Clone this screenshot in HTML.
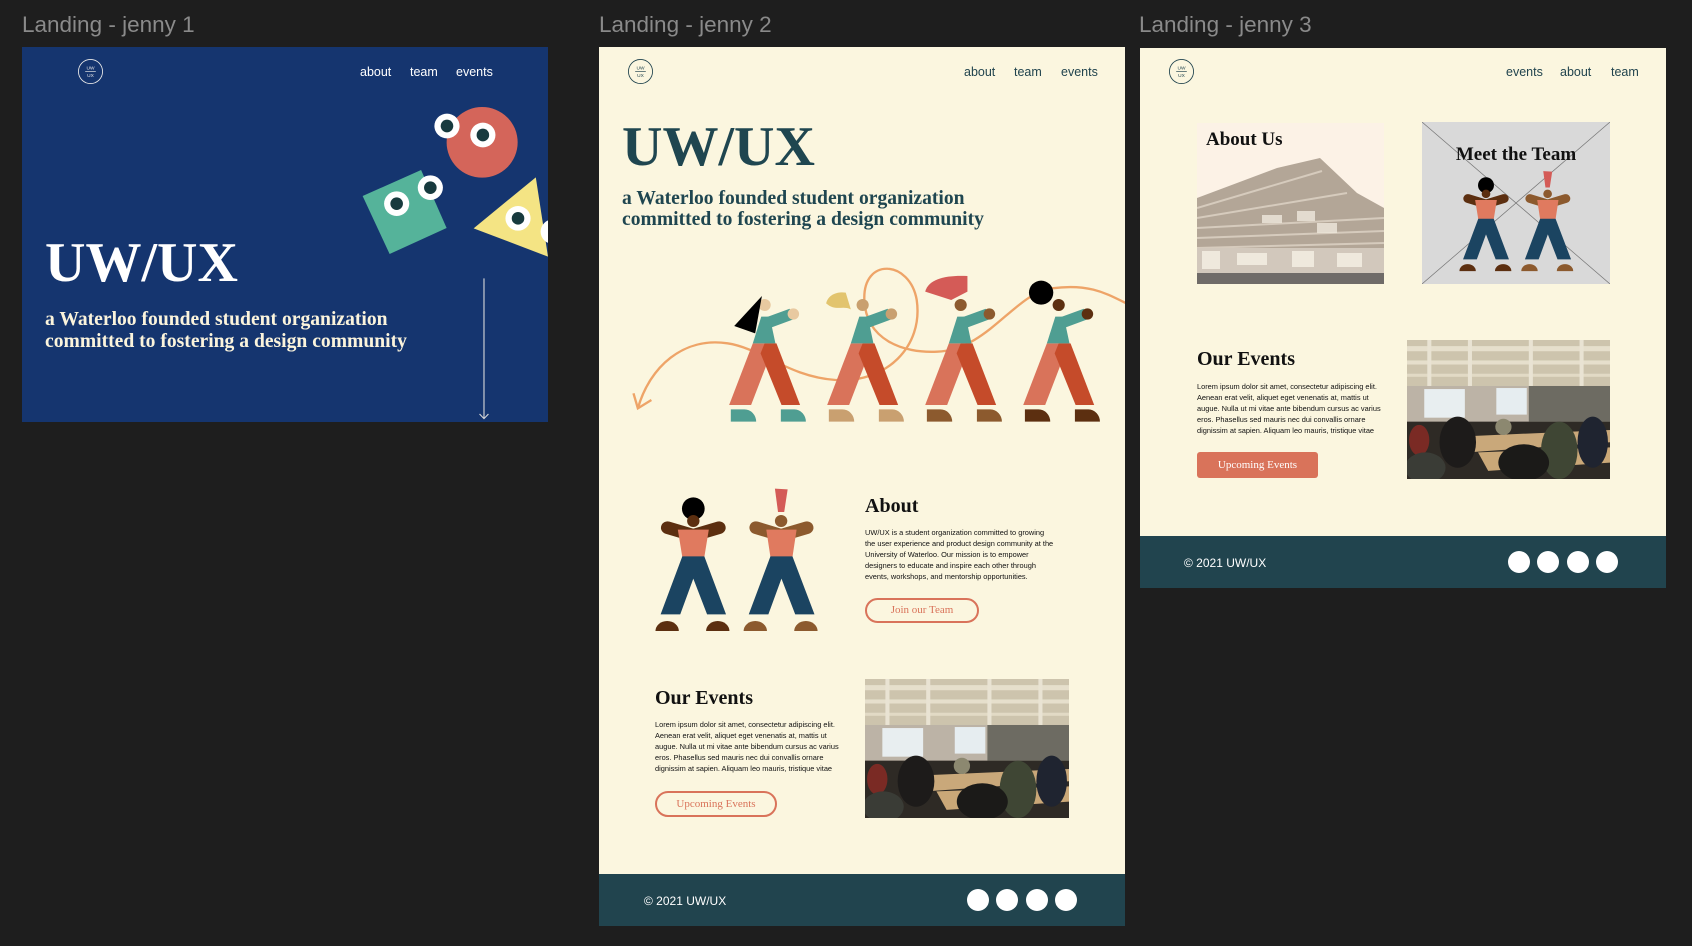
<!DOCTYPE html>
<html><head><meta charset="utf-8">
<style>
*{margin:0;padding:0;box-sizing:border-box}
body{width:1692px;height:946px;background:#1e1e1e;position:relative;overflow:hidden;font-family:"Liberation Sans",sans-serif}
.a{position:absolute;white-space:nowrap;line-height:1}
.lbl{font-size:22.5px;color:#8a8a8a;top:14px}
.serif{font-family:"Liberation Serif",serif;font-weight:bold}
.frame{position:absolute;overflow:hidden}
.nav{font-size:12.5px}
.p{font-size:7.4px;line-height:11.1px;color:#111;position:absolute;white-space:nowrap}
svg{position:absolute}
</style></head><body>
<svg width="0" height="0" style="position:absolute">
<defs>
<symbol id="pair" viewBox="180 140 490 440" preserveAspectRatio="none">
 <ellipse cx="300" cy="205" rx="33" ry="34" fill="#000"/>
 <line x1="300" y1="285" x2="225" y2="262" stroke="#5c2f10" stroke-width="38" stroke-linecap="round"/>
 <line x1="300" y1="285" x2="375" y2="262" stroke="#5c2f10" stroke-width="38" stroke-linecap="round"/>
 <ellipse cx="300" cy="242" rx="18" ry="18" fill="#5c2f10"/>
 <polygon points="255,268 345,268 332,350 268,350" fill="#e07a5f"/>
 <polygon points="268,348 332,348 395,522 340,522 300,415 262,522 205,522" fill="#1b4461"/>
 <path d="M190,572 A34,30 0 0 1 258,572 Z" fill="#5c2f10"/>
 <path d="M337,572 A34,30 0 0 1 405,572 Z" fill="#5c2f10"/>
 <polygon points="537,145 574,147 564,215 546,215" fill="#d45b57"/>
 <line x1="555" y1="285" x2="482" y2="262" stroke="#8c5a2e" stroke-width="38" stroke-linecap="round"/>
 <line x1="555" y1="285" x2="630" y2="262" stroke="#8c5a2e" stroke-width="38" stroke-linecap="round"/>
 <ellipse cx="555" cy="242" rx="18" ry="18" fill="#8c5a2e"/>
 <polygon points="512,268 600,268 588,350 524,350" fill="#e07a5f"/>
 <polygon points="524,348 588,348 652,522 596,522 556,415 518,522 461,522" fill="#1b4461"/>
 <path d="M446,572 A34,30 0 0 1 514,572 Z" fill="#8c5a2e"/>
 <path d="M593,572 A34,30 0 0 1 661,572 Z" fill="#8c5a2e"/>
</symbol>
<symbol id="photo" viewBox="0 0 200 136" preserveAspectRatio="none">
 <rect width="200" height="136" fill="#3b3730"/>
 <rect width="200" height="50" fill="#cdc4ad"/>
 <rect y="6" width="200" height="5" fill="#e6dfcc"/><rect y="20" width="200" height="4" fill="#e6dfcc"/><rect y="33" width="200" height="3" fill="#e2dac5"/>
 <rect x="20" y="0" width="4" height="45" fill="#e9e3d3"/><rect x="60" y="0" width="4" height="45" fill="#e9e3d3"/><rect x="120" y="0" width="4" height="45" fill="#e9e3d3"/><rect x="170" y="0" width="4" height="45" fill="#e9e3d3"/>
 <rect y="45" width="200" height="35" fill="#bcb3a6"/>
 <rect x="120" y="45" width="80" height="35" fill="#6d6b62"/>
 <rect x="17" y="48" width="40" height="28" fill="#e8eef0"/>
 <rect x="88" y="47" width="30" height="26" fill="#e6edf0"/>
 <rect x="0" y="80" width="200" height="56" fill="#2e2a25"/>
 <polygon points="40,95 200,88 200,100 60,110" fill="#c9a87a"/>
 <polygon points="70,110 200,105 200,120 80,128" fill="#caa878"/>
 <ellipse cx="50" cy="100" rx="18" ry="25" fill="#1d1b1a"/>
 <ellipse cx="12" cy="98" rx="10" ry="15" fill="#7a2a24"/>
 <ellipse cx="150" cy="108" rx="18" ry="28" fill="#3f4634"/>
 <ellipse cx="183" cy="100" rx="15" ry="25" fill="#1f2430"/>
 <ellipse cx="95" cy="85" rx="8" ry="8" fill="#8c8870"/>
 <ellipse cx="115" cy="120" rx="25" ry="18" fill="#1b1a18"/>
 <ellipse cx="18" cy="125" rx="20" ry="15" fill="#3a3c36"/>
</symbol>
<symbol id="logo" viewBox="0 0 28 28">
 <circle cx="14" cy="14" r="12.5" fill="none" stroke="currentColor" stroke-width="0.9"/>
 <line x1="8.5" y1="14" x2="19.5" y2="14" stroke="currentColor" stroke-width="0.7"/>
 <text x="14" y="12" font-size="5" text-anchor="middle" fill="currentColor" font-family="Liberation Sans">UW</text>
 <text x="14" y="19.5" font-size="5" text-anchor="middle" fill="currentColor" font-family="Liberation Sans">UX</text>
</symbol>
</defs></svg>

<!-- labels -->
<div class="a lbl" style="left:22px">Landing - jenny 1</div>
<div class="a lbl" style="left:599px">Landing - jenny 2</div>
<div class="a lbl" style="left:1139px">Landing - jenny 3</div>

<!-- FRAME 1 -->
<div class="frame" style="left:22px;top:47px;width:526px;height:375px;background:#15356f"></div>
<svg style="left:0;top:0" width="548" height="422" viewBox="0 0 1481 1266" preserveAspectRatio="none">
 <ellipse cx="1303" cy="427" rx="96" ry="106" fill="#d4655a"/>
 <ellipse cx="1208" cy="378" rx="34" ry="37" fill="#fff"/><ellipse cx="1208" cy="378" rx="17" ry="19" fill="#173a3e"/>
 <ellipse cx="1305" cy="405" rx="34" ry="37" fill="#fff"/><ellipse cx="1305" cy="405" rx="17" ry="19" fill="#173a3e"/>
 <polygon points="980,588 1138,510 1207,684 1053,762" fill="#55b39a"/>
 <ellipse cx="1072" cy="611" rx="34" ry="37" fill="#fff"/><ellipse cx="1072" cy="611" rx="17" ry="19" fill="#173a3e"/>
 <ellipse cx="1163" cy="563" rx="34" ry="37" fill="#fff"/><ellipse cx="1163" cy="563" rx="17" ry="19" fill="#173a3e"/>
 <polygon points="1280,685 1448,532 1481,770" fill="#f4e484"/>
 <ellipse cx="1400" cy="655" rx="34" ry="37" fill="#fff"/><ellipse cx="1400" cy="655" rx="17" ry="19" fill="#173a3e"/>
 <ellipse cx="1495" cy="695" rx="34" ry="37" fill="#fff"/>
 <line x1="1308" y1="835" x2="1308" y2="1255" stroke="#d8d8d8" stroke-width="3"/>
 <polyline points="1296,1242 1308,1256 1320,1242" fill="none" stroke="#d8d8d8" stroke-width="3"/>
</svg>
<svg style="left:77px;top:58px;color:#e8e8e8" width="27" height="27"><use href="#logo"/></svg>
<div class="a nav" style="left:360px;top:66px;color:#fff">about</div>
<div class="a nav" style="left:410px;top:66px;color:#fff">team</div>
<div class="a nav" style="left:456px;top:66px;color:#fff">events</div>
<div class="a serif" style="left:45px;top:235px;font-size:56px;color:#fff">UW/UX</div>
<div class="a serif" style="left:45px;top:309px;font-size:19.6px;line-height:21.5px;color:#fbf4dc">a Waterloo founded student organization<br>committed to fostering a design community</div>

<!-- FRAME 2 -->
<div class="frame" style="left:599px;top:47px;width:526px;height:879px;background:#fbf6df">
 <svg style="left:0;top:-7px" width="530" height="400" viewBox="0 0 1568 1200" preserveAspectRatio="none">
  <path d="M115,1105 C150,980 250,890 380,910 C480,925 560,1010 700,1020 C850,1030 960,920 940,780 C920,660 780,650 785,780 C790,900 900,940 1000,935 C1150,930 1230,760 1340,745 C1450,730 1500,760 1560,790" fill="none" stroke="#eea468" stroke-width="7"/>
  <polyline points="102,1060 115,1105 155,1080" fill="none" stroke="#eea468" stroke-width="7"/>
  <g id="fig">
   <polygon points="455,910 520,910 450,1095 385,1095" fill="#d9735a"/>
   <polygon points="490,910 525,910 595,1095 540,1095 478,940" fill="#c54b2a"/>
   <polygon points="480,830 505,830 522,910 455,910" fill="#4f9e92"/>
   <line x1="500" y1="848" x2="570" y2="822" stroke="#4f9e92" stroke-width="34"/>
  </g>
  <g>
   <circle cx="575" cy="822" r="17" fill="#e8c9a0"/><circle cx="490" cy="795" r="18" fill="#e8c9a0"/>
   <polygon points="400,858 482,768 462,880" fill="#000"/>
   <path d="M390,1145 L390,1108 L430,1108 A35,37 0 0 1 465,1145 Z" fill="#4f9e92"/>
   <path d="M538,1145 L538,1108 L578,1108 A35,37 0 0 1 612,1145 Z" fill="#4f9e92"/>
  </g>
  <g transform="translate(290,0)">
   <use href="#fig"/>
   <circle cx="575" cy="822" r="17" fill="#c9a070"/><circle cx="490" cy="795" r="18" fill="#c9a070"/>
   <path d="M382,790 C390,760 420,755 440,758 L455,808 C430,795 410,815 382,790 Z" fill="#e2c46e"/>
   <path d="M390,1145 L390,1108 L430,1108 A35,37 0 0 1 465,1145 Z" fill="#c9a070"/>
   <path d="M538,1145 L538,1108 L578,1108 A35,37 0 0 1 612,1145 Z" fill="#c9a070"/>
  </g>
  <g transform="translate(580,0)">
   <use href="#fig"/>
   <circle cx="575" cy="822" r="17" fill="#8c5a2e"/><circle cx="490" cy="795" r="18" fill="#8c5a2e"/>
   <path d="M385,755 C395,715 450,705 510,708 L510,755 L462,780 Z" fill="#d45b57"/>
   <path d="M390,1145 L390,1108 L430,1108 A35,37 0 0 1 465,1145 Z" fill="#8c5a2e"/>
   <path d="M538,1145 L538,1108 L578,1108 A35,37 0 0 1 612,1145 Z" fill="#8c5a2e"/>
  </g>
  <g transform="translate(870,0)">
   <use href="#fig"/>
   <circle cx="575" cy="822" r="17" fill="#5c2f10"/><circle cx="490" cy="795" r="18" fill="#5c2f10"/>
   <circle cx="438" cy="758" r="36" fill="#000"/>
   <path d="M390,1145 L390,1108 L430,1108 A35,37 0 0 1 465,1145 Z" fill="#5c2f10"/>
   <path d="M538,1145 L538,1108 L578,1108 A35,37 0 0 1 612,1145 Z" fill="#5c2f10"/>
  </g>
 </svg>
 <svg style="left:53px;top:439.7px" width="168.7" height="146.7"><use href="#pair" width="168.7" height="146.7"/></svg>
 <svg style="left:266px;top:632px" width="204" height="139" viewBox="0 0 204 139" preserveAspectRatio="none"><use href="#photo" width="204" height="139"/></svg>
 <div style="position:absolute;left:0;top:827px;width:526px;height:52px;background:#21444e"></div>
</div>
<svg style="left:627px;top:58px;color:#21444e" width="27" height="27"><use href="#logo"/></svg>
<div class="a nav" style="left:964px;top:66px;color:#21444e">about</div>
<div class="a nav" style="left:1014px;top:66px;color:#21444e">team</div>
<div class="a nav" style="left:1061px;top:66px;color:#21444e">events</div>
<div class="a serif" style="left:622px;top:119px;font-size:56px;color:#1f4650">UW/UX</div>
<div class="a serif" style="left:622px;top:187.5px;font-size:19.6px;line-height:21.5px;color:#1f4650">a Waterloo founded student organization<br>committed to fostering a design community</div>
<div class="a serif" style="left:865px;top:496px;font-size:20px;color:#111">About</div>
<div class="p" style="left:865px;top:527px">UW/UX is a student organization committed to growing<br>the user experience and product design community at the<br>University of Waterloo. Our mission is to empower<br>designers to educate and inspire each other through<br>events, workshops, and mentorship opportunities.</div>
<div class="a" style="left:865px;top:598px;width:114px;height:25px;border:2px solid #d9735a;border-radius:13px;color:#d9735a;font-family:'Liberation Serif',serif;font-size:11px;line-height:21px;text-align:center">Join our Team</div>
<div class="a serif" style="left:655px;top:688px;font-size:20px;color:#111">Our Events</div>
<div class="p" style="left:655px;top:719px">Lorem ipsum dolor sit amet, consectetur adipiscing elit.<br>Aenean erat velit, aliquet eget venenatis at, mattis ut<br>augue. Nulla ut mi vitae ante bibendum cursus ac varius<br>eros. Phasellus sed mauris nec dui convallis ornare<br>dignissim at sapien. Aliquam leo mauris, tristique vitae</div>
<div class="a" style="left:655px;top:791px;width:122px;height:26px;border:2px solid #d9735a;border-radius:13px;color:#d9735a;font-family:'Liberation Serif',serif;font-size:11px;line-height:22px;text-align:center">Upcoming Events</div>
<div class="a" style="left:644px;top:895px;font-size:12px;color:#fff">© 2021 UW/UX</div>
<svg style="left:960px;top:888px" width="120" height="24"><circle cx="18" cy="12" r="11" fill="#fff"/><circle cx="47" cy="12" r="11" fill="#fff"/><circle cx="77" cy="12" r="11" fill="#fff"/><circle cx="106" cy="12" r="11" fill="#fff"/></svg>

<!-- FRAME 3 -->
<div class="frame" style="left:1140px;top:48px;width:526px;height:540px;background:#fbf6df">
 <div style="position:absolute;left:0;top:488px;width:526px;height:52px;background:#21444e"></div>
</div>
<svg style="left:1168px;top:58px;color:#21444e" width="27" height="27"><use href="#logo"/></svg>
<div class="a nav" style="left:1506px;top:66px;color:#21444e">events</div>
<div class="a nav" style="left:1560px;top:66px;color:#21444e">about</div>
<div class="a nav" style="left:1611px;top:66px;color:#21444e">team</div>
<svg style="left:1197px;top:123px" width="187" height="161" viewBox="0 0 187 161" preserveAspectRatio="none">
 <rect width="187" height="161" fill="#fcf2e6"/>
 <polygon points="0,75 80,45 123,35 160,70 187,85 187,161 0,161" fill="#b3a697"/>
 <g stroke="#d6cbbd" stroke-width="2">
  <line x1="0" y1="85" x2="125" y2="48"/><line x1="0" y1="95" x2="150" y2="70"/><line x1="0" y1="105" x2="187" y2="95"/><line x1="0" y1="115" x2="187" y2="108"/><line x1="0" y1="125" x2="187" y2="120"/>
 </g>
 <rect x="0" y="125" width="187" height="25" fill="#d2c8bc"/>
 <g fill="#efe9dd"><rect x="5" y="128" width="18" height="18"/><rect x="40" y="130" width="30" height="12"/><rect x="95" y="128" width="22" height="16"/><rect x="140" y="130" width="25" height="14"/></g>
 <g fill="#efe9dd" opacity="0.8"><rect x="65" y="92" width="20" height="8"/><rect x="100" y="88" width="18" height="10"/><rect x="120" y="100" width="20" height="10"/></g>
 <rect x="0" y="150" width="187" height="11" fill="#6f6b68"/>
</svg>
<div class="a serif" style="left:1206px;top:130px;font-size:19px;color:#111">About Us</div>
<svg style="left:1422px;top:122px" width="188" height="162"><rect width="188" height="162" fill="#d9d9d9"/><line x1="0" y1="0" x2="188" y2="162" stroke="#777" stroke-width="0.7"/><line x1="188" y1="0" x2="0" y2="162" stroke="#777" stroke-width="0.7"/></svg>
<svg style="left:1456.6px;top:169.7px" width="118.4" height="103"><use href="#pair" width="118.4" height="103"/></svg>
<div class="a serif" style="left:1422px;width:188px;text-align:center;top:145px;font-size:19px;color:#111">Meet the Team</div>
<div class="a serif" style="left:1197px;top:349px;font-size:20px;color:#111">Our Events</div>
<div class="p" style="left:1197px;top:381px">Lorem ipsum dolor sit amet, consectetur adipiscing elit.<br>Aenean erat velit, aliquet eget venenatis at, mattis ut<br>augue. Nulla ut mi vitae ante bibendum cursus ac varius<br>eros. Phasellus sed mauris nec dui convallis ornare<br>dignissim at sapien. Aliquam leo mauris, tristique vitae</div>
<div class="a" style="left:1197px;top:452px;width:121px;height:26px;background:#d9735a;border-radius:3px;color:#fff;font-family:'Liberation Serif',serif;font-size:11px;line-height:26px;text-align:center">Upcoming Events</div>
<svg style="left:1407px;top:340px" width="203" height="139" viewBox="0 0 203 139" preserveAspectRatio="none"><use href="#photo" width="203" height="139"/></svg>
<div class="a" style="left:1184px;top:557px;font-size:12px;color:#fff">© 2021 UW/UX</div>
<svg style="left:1500px;top:550px" width="120" height="24"><circle cx="19" cy="12" r="11" fill="#fff"/><circle cx="48" cy="12" r="11" fill="#fff"/><circle cx="78" cy="12" r="11" fill="#fff"/><circle cx="107" cy="12" r="11" fill="#fff"/></svg>
</body></html>
